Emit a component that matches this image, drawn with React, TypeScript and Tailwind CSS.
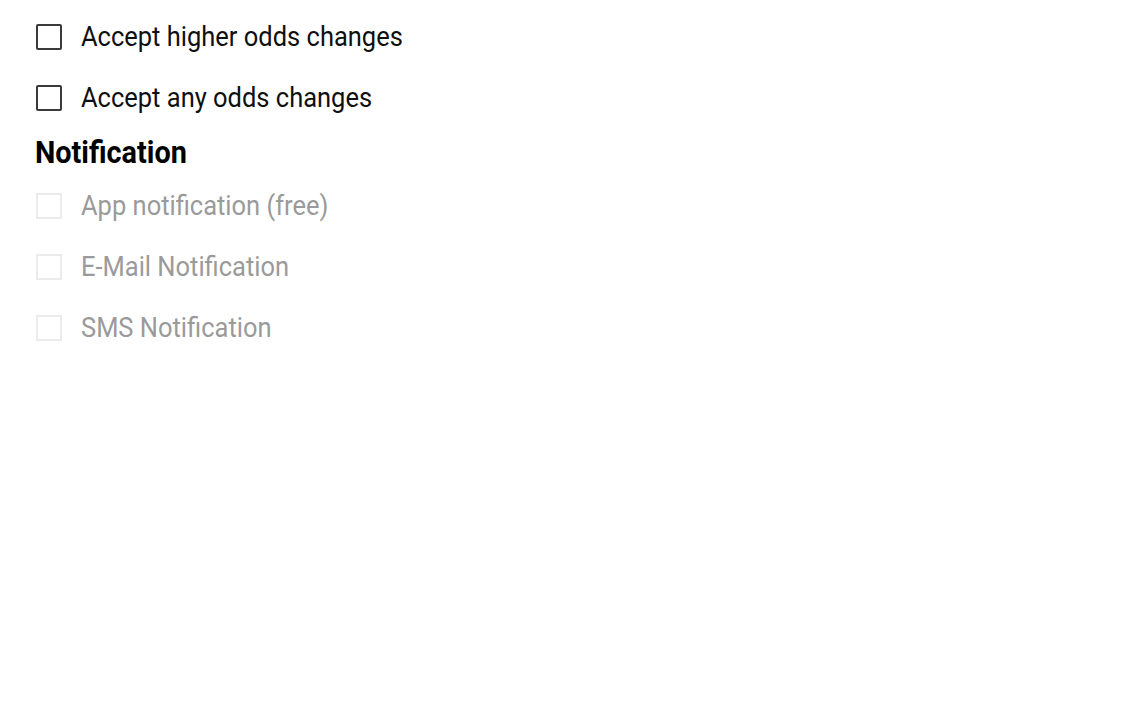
import React from 'react';

const font = { fontFamily: 'Roboto, "Noto Sans", sans-serif' };

function CheckRow({ label, disabled }: { label: string; disabled?: boolean }) {
  return (
    <label className="flex h-[61px] items-center">
      <span
        className={
          disabled
            ? 'box-border h-[26px] w-[26px] shrink-0 border-2 border-[#ebebeb] bg-white'
            : 'box-border h-[26px] w-[26px] shrink-0 rounded-[2px] border-2 border-[#3a3a3a] bg-white'
        }
      />
      <span
        className={
          disabled
            ? 'ml-[19px] origin-left scale-x-[0.91] whitespace-nowrap text-[28px] leading-none text-[#9a9a9a]'
            : 'ml-[19px] origin-left scale-x-[0.91] whitespace-nowrap text-[28px] leading-none text-[#0f0f0f]'
        }
      >
        {label}
      </span>
    </label>
  );
}

export default function App() {
  return (
    <div className="h-[716px] w-[1146px] overflow-hidden bg-white" style={font}>
      <div className="-mt-[35px] pl-[36px]">
        {/* previous option, scrolled mostly out of view */}
        <div className="flex h-[34px] items-end pl-[45px]">
          <span className="origin-left scale-x-[0.91] whitespace-nowrap text-[28px] leading-none text-[#141414]">
            Changing odds up
          </span>
        </div>
        <div className="mt-[7px]">
          <CheckRow label="Accept higher odds changes" />
          <CheckRow label="Accept any odds changes" />
        </div>
        <h2 className="-ml-px flex h-[48px] origin-left scale-x-[0.93] items-center whitespace-nowrap text-[31px] font-bold leading-none text-black">
          Notification
        </h2>
        <div className="mt-[-1px]">
          <CheckRow label="App notification (free)" disabled />
          <CheckRow label="E-Mail Notification" disabled />
          <CheckRow label="SMS Notification" disabled />
        </div>
      </div>
    </div>
  );
}
